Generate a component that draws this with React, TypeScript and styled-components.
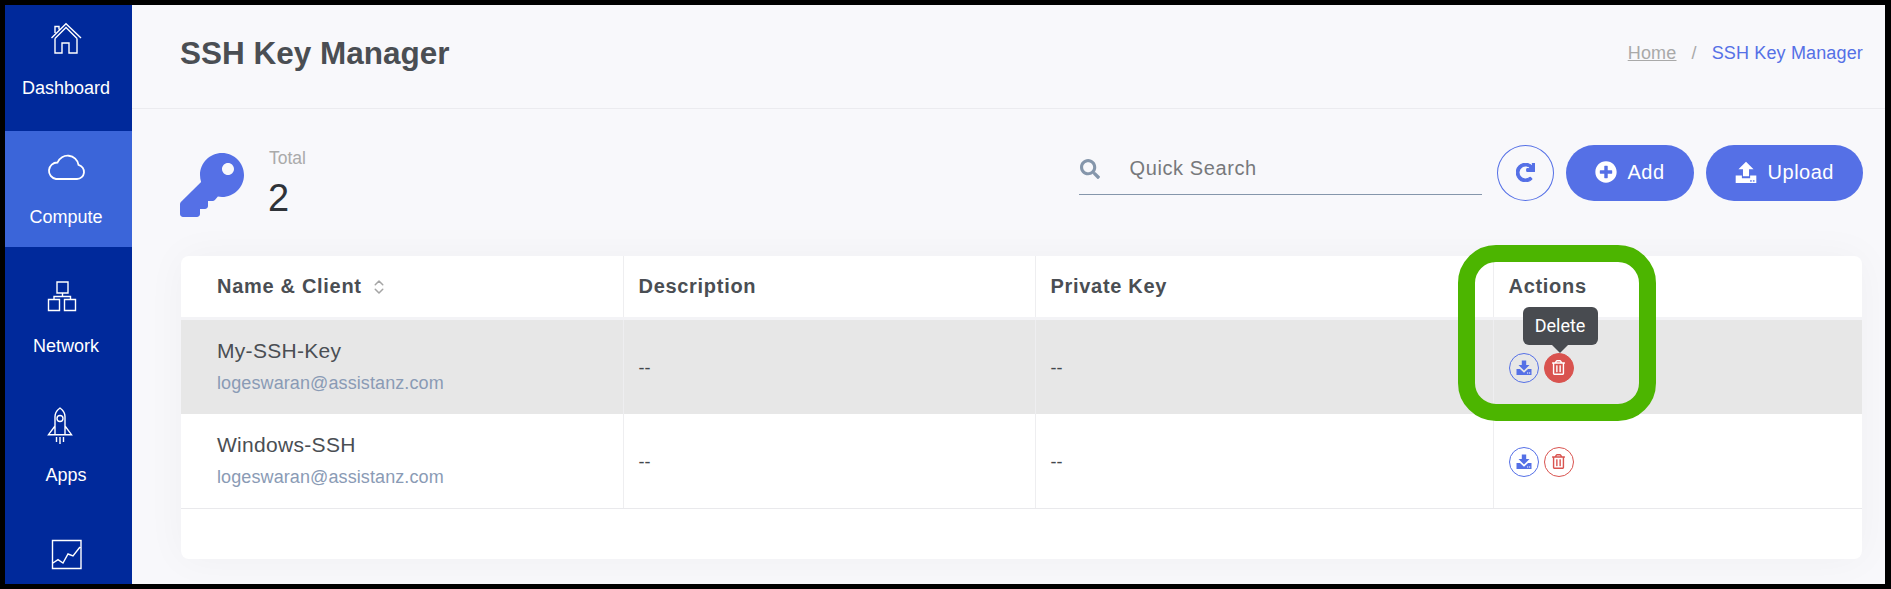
import React from "react";
import styled, { createGlobalStyle } from "styled-components";
import {
  FaKey,
  FaPlusCircle,
  FaRedo,
  FaRegTrashAlt,
  FaSearch,
} from "react-icons/fa";
import { LuChevronsUpDown } from "react-icons/lu";

const GlobalStyle = createGlobalStyle`
  html, body {
    margin: 0;
    padding: 0;
    background: #000;
  }
  body {
    font-family: "Liberation Sans", Arial, sans-serif;
  }
  * {
    box-sizing: border-box;
  }
`;

const Frame = styled.div`
  position: relative;
  display: flex;
  width: 1891px;
  height: 589px;
  border: solid #000;
  border-width: 5px 6px 5px 5px;
  overflow: hidden;
`;

const Sidebar = styled.nav`
  flex: 0 0 127px;
  background: #00299b;
  display: flex;
  flex-direction: column;
  gap: 13px;
  overflow: hidden;
`;

const NavItem = styled.a<{ $active?: boolean; $first?: boolean }>`
  flex: 0 0 116px;
  margin-top: ${(p) => (p.$first ? "-3px" : "0")};
  padding: 16px 5px 0 0;
  display: flex;
  flex-direction: column;
  align-items: center;
  gap: 18px;
  color: #fff;
  font-size: 18px;
  line-height: 24px;
  background: ${(p) => (p.$active ? "#3b65d9" : "transparent")};
`;

const NavIcon = styled.svg`
  display: block;
  width: 40px;
  height: 40px;
  fill: none;
  stroke: #fff;
  stroke-width: 1.4;
`;

const Main = styled.main`
  flex: 1;
  min-width: 0;
  background: #f8f8fb;
  display: flex;
  flex-direction: column;
`;

const Header = styled.header`
  flex: 0 0 104px;
  display: flex;
  align-items: center;
  justify-content: space-between;
  padding: 0 22px 7px 48px;
  border-bottom: 1px solid #ebebef;
`;

const Title = styled.h1`
  margin: 0;
  font-size: 31.5px;
  font-weight: 700;
  color: #4a4e53;
`;

const Breadcrumb = styled.div`
  display: flex;
  align-items: center;
  gap: 15px;
  font-size: 18px;
  letter-spacing: 0.15px;
  color: #5570e6;
`;

const Crumb = styled.a`
  color: #a9a9a9;
  text-decoration: underline;
  letter-spacing: 0.2px;
`;

const Slash = styled.span`
  color: #a9a9a9;
`;

const Content = styled.div`
  flex: 1;
  padding: 36px 23px 0 49px;
`;

const Toolbar = styled.div`
  display: flex;
  align-items: flex-start;
  height: 111px;
`;

const Stat = styled.div`
  display: flex;
  gap: 25px;
  margin-left: -1px;
  padding-top: 8px;
  color: #5570e6;
`;

const StatText = styled.div`
  display: flex;
  flex-direction: column;
  margin-top: -5px;
`;

const StatLabel = styled.span`
  font-size: 17.5px;
  line-height: 20px;
  color: #aaaaaa;
`;

const StatValue = styled.span`
  margin: 9px 0 0 -1px;
  font-size: 38px;
  line-height: 42px;
  color: #2f3338;
`;

const Search = styled.label`
  margin-left: auto;
  width: 403px;
  height: 50px;
  display: flex;
  align-items: center;
  gap: 30px;
  padding: 0 0 2px 1px;
  border-bottom: 1px solid #8596ab;
  color: #8596ab;
`;

const SearchInput = styled.input`
  flex: 1;
  min-width: 0;
  border: 0;
  outline: 0;
  padding: 0;
  background: transparent;
  font: 20px "Liberation Sans", Arial, sans-serif;
  letter-spacing: 0.6px;
  &::placeholder {
    color: #77797c;
    opacity: 1;
  }
`;

const Buttons = styled.div`
  display: flex;
  gap: 12px;
  margin: 0 -1px 0 15px;
`;

const RefreshButton = styled.button`
  width: 57px;
  height: 56px;
  padding: 0 0 2px;
  display: flex;
  align-items: center;
  justify-content: center;
  border: 1px solid #5570e6;
  border-radius: 50%;
  background: transparent;
  color: #5570e6;
`;

const PillButton = styled.button`
  height: 56px;
  padding: 0 29px 2px;
  display: flex;
  align-items: center;
  gap: 11px;
  border: 0;
  border-radius: 28px;
  background: #5570e6;
  color: #fff;
  font: 20px "Liberation Sans", Arial, sans-serif;
  letter-spacing: 0.5px;
`;

const Card = styled.section`
  height: 303px;
  background: #fff;
  border-radius: 8px;
  box-shadow: 0 0 40px rgba(0, 0, 0, 0.04);
  overflow: hidden;
`;

const Table = styled.table`
  width: 100%;
  table-layout: fixed;
  border-collapse: collapse;
`;

const HeadCell = styled.th<{ $first?: boolean }>`
  height: 62px;
  padding: 0 0 0 ${(p) => (p.$first ? "36px" : "15px")};
  text-align: left;
  font-size: 20px;
  font-weight: 700;
  letter-spacing: 0.7px;
  color: #4a4e53;
  border-bottom: 3px solid #f3f3f6;
  border-right: 1px solid #eeeef0;
  &:last-child {
    border-right: 0;
  }
`;

const SortIcon = styled(LuChevronsUpDown)`
  margin-left: 8px;
  vertical-align: -3px;
  color: #a5a5a5;
`;

const Row = styled.tr<{ $hover?: boolean }>`
  height: ${(p) => (p.$hover ? "96px" : "94px")};
  background: ${(p) => (p.$hover ? "#e7e7e7" : "transparent")};
  &:last-child td {
    border-bottom: 1px solid #e9e9ec;
  }
`;

const Cell = styled.td<{ $first?: boolean }>`
  padding: 4px 0 0 ${(p) => (p.$first ? "36px" : "15px")};
  font-size: 18px;
  color: #43474c;
  border-right: 1px solid #eeeef0;
  &:last-child {
    border-right: 0;
  }
`;

const KeyName = styled.div`
  margin-top: -4px;
  font-size: 21px;
  line-height: 24px;
  letter-spacing: 0.3px;
  color: #4a4e53;
`;

const KeyClient = styled.div`
  margin-top: 9px;
  font-size: 18px;
  line-height: 22px;
  letter-spacing: 0.1px;
  color: #8a9bb5;
`;

const Actions = styled.div`
  display: flex;
  gap: 5px;
  margin-top: -2px;
`;

const RoundAction = styled.button<{ $tone: string; $solid?: boolean }>`
  position: relative;
  width: 30px;
  height: 30px;
  padding: 0;
  display: flex;
  align-items: center;
  justify-content: center;
  border: 1px solid ${(p) => p.$tone};
  border-radius: 50%;
  background: ${(p) => (p.$solid ? p.$tone : "transparent")};
  color: ${(p) => (p.$solid ? "#fff" : p.$tone)};
`;

const Tooltip = styled.span`
  position: absolute;
  left: -22px;
  bottom: 37px;
  width: 75px;
  height: 38px;
  display: flex;
  align-items: center;
  justify-content: center;
  border-radius: 6px;
  background: #484b50;
  color: #fff;
  font: 18px Roboto, sans-serif;
  &::after {
    content: "";
    position: absolute;
    left: 50%;
    top: 100%;
    margin-left: -8px;
    border: 8px solid transparent;
    border-bottom: 0;
    border-top-color: #484b50;
  }
`;

// the green box drawn over the screenshot, it is an annotation and not part of the app
const Highlight = styled.div`
  position: absolute;
  left: 1453px;
  top: 240px;
  width: 198px;
  height: 176px;
  border: 17px solid #4cb500;
  border-radius: 38px;
  pointer-events: none;
`;

const TrayIcon: React.FC<{ dots: string; up?: boolean; size: number }> = ({ dots, up, size }) => (
  <svg width={size} height={size} viewBox="0 0 16 16" fill="currentColor">
    {up ? (
      <>
        <path d="M8 .5 13.5 6H10.2V11H5.8V6H2.5Z" />
        <path d="M.5 10.5H5V12.5H11V10.5H15.5V16H.5Z" />
      </>
    ) : (
      <>
        <path d="M5.8.5H10.2V5H13.5L8 10.5 2.5 5H5.8Z" />
        <path d="M.5 9H4L8 12.8 12 9H15.5V15H.5Z" />
      </>
    )}
    <rect x="11" y={up ? 14 : 12.5} width="1.2" height="1" fill={dots} />
    <rect x="13" y={up ? 14 : 12.5} width="1.2" height="1" fill={dots} />
  </svg>
);

const keys = [
  { name: "My-SSH-Key", client: "logeswaran@assistanz.com", hover: true },
  { name: "Windows-SSH", client: "logeswaran@assistanz.com", hover: false },
];

const App: React.FC = () => {
  return (
    <>
      <GlobalStyle />
      <Frame>
        <Sidebar>
          <NavItem $first>
            <NavIcon viewBox="0 0 40 40">
              <path d="M5.5 20 20 5.7 35 20M9 20.5 20 9.5 31 20.5M9 20.5V35H16V25H23V35H31V20.5M9 15V8.5H13V11.5" />
            </NavIcon>
            Dashboard
          </NavItem>
          <NavItem $active>
            <NavIcon viewBox="0 0 40 40" style={{ strokeWidth: 1.8 }}>
              <path d="M10 32H31A7.2 7.2 0 0 0 32.5 17.8 11 11 0 0 0 11.5 15.5 8.3 8.3 0 0 0 10 32Z" />
            </NavIcon>
            Compute
          </NavItem>
          <NavItem>
            <NavIcon viewBox="0 0 40 40">
              <path d="M11 6H22V17H11ZM2.5 23.5H13.5V34.5H2.5ZM18.5 23.5H29.5V34.5H18.5ZM16.5 17V20.5M8 23.5V20.5H24.5V23.5" />
            </NavIcon>
            Network
          </NavItem>
          <NavItem>
            <NavIcon viewBox="0 0 40 40">
              <path d="M9 29.7V11.5C9 8 12 4.5 14 3 16 4.5 19 8 19 11.5V29.7ZM9 21 2.5 29.7H9M19 21 25.5 29.7H19M10.5 32V37M14 32V39M17.5 32V37" />
              <circle cx="14" cy="13.5" r="3" />
            </NavIcon>
            Apps
          </NavItem>
          <NavItem>
            <NavIcon viewBox="0 0 40 40">
              <path d="M6.5 6.5H35V34.5H6.5ZM7 29 12 25.7 17 29 22 20 27 22 34 13" />
            </NavIcon>
          </NavItem>
        </Sidebar>
        <Main>
          <Header>
            <Title>SSH Key Manager</Title>
            <Breadcrumb>
              <Crumb>Home</Crumb>
              <Slash>/</Slash>
              <span>SSH Key Manager</span>
            </Breadcrumb>
          </Header>
          <Content>
            <Toolbar>
              <Stat>
                <FaKey size={64} />
                <StatText>
                  <StatLabel>Total</StatLabel>
                  <StatValue>2</StatValue>
                </StatText>
              </Stat>
              <Search>
                <FaSearch size={20} />
                <SearchInput placeholder="Quick Search" />
              </Search>
              <Buttons>
                <RefreshButton>
                  <FaRedo size={19} stroke="currentColor" strokeWidth={30} />
                </RefreshButton>
                <PillButton>
                  <FaPlusCircle size={22} />
                  Add
                </PillButton>
                <PillButton>
                  <TrayIcon up dots="#5570e6" size={22} />
                  Upload
                </PillButton>
              </Buttons>
            </Toolbar>
            <Card>
              <Table>
                <colgroup>
                  <col width="442" />
                  <col width="412" />
                  <col width="458" />
                  <col width="369" />
                </colgroup>
                <thead>
                  <tr>
                    <HeadCell $first>
                      Name &amp; Client
                      <SortIcon size={18} />
                    </HeadCell>
                    <HeadCell>Description</HeadCell>
                    <HeadCell>Private Key</HeadCell>
                    <HeadCell>Actions</HeadCell>
                  </tr>
                </thead>
                <tbody>
                  {keys.map((item) => (
                    <Row key={item.name} $hover={item.hover}>
                      <Cell $first>
                        <KeyName>{item.name}</KeyName>
                        <KeyClient>{item.client}</KeyClient>
                      </Cell>
                      <Cell>--</Cell>
                      <Cell>--</Cell>
                      <Cell>
                        <Actions>
                          <RoundAction $tone="#5570e6">
                            <TrayIcon dots="#ffffff" size={16} />
                          </RoundAction>
                          <RoundAction $tone="#d9534f" $solid={item.hover}>
                            <FaRegTrashAlt size={15} />
                            {item.hover && <Tooltip>Delete</Tooltip>}
                          </RoundAction>
                        </Actions>
                      </Cell>
                    </Row>
                  ))}
                </tbody>
              </Table>
            </Card>
          </Content>
        </Main>
        <Highlight />
      </Frame>
    </>
  );
};

export default App;
